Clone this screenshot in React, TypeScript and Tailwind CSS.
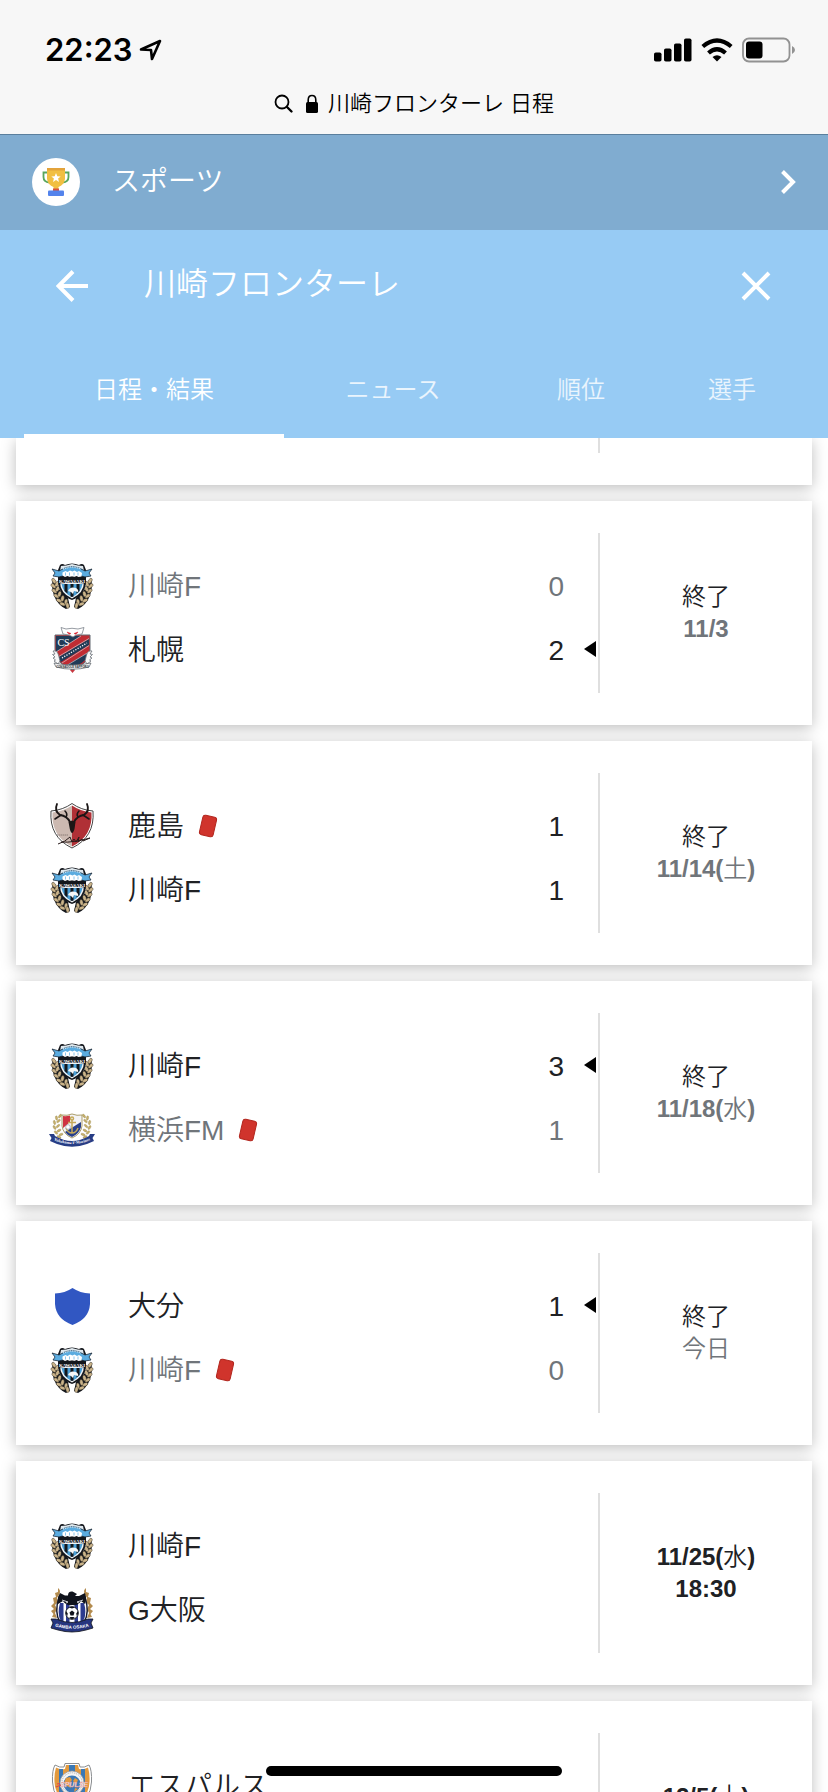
import React from 'react';

type TeamId = 'kawasaki' | 'sapporo' | 'kashima' | 'yokohama' | 'oita' | 'gamba' | 'spulse';

interface Side {
  team: TeamId;
  name: string;
  score?: number;
  redCard?: boolean;
  winner?: boolean;
  dim?: boolean;
}

interface Match {
  id: number;
  home: Side;
  away: Side;
  status?: string;
  date: string;
  weekday?: string;
  time?: string;
}

const MATCHES: Match[] = [
  {
    id: 1,
    home: { team: 'kawasaki', name: '川崎F', score: 0, dim: true },
    away: { team: 'sapporo', name: '札幌', score: 2, winner: true },
    status: '終了',
    date: '11/3',
  },
  {
    id: 2,
    home: { team: 'kashima', name: '鹿島', score: 1, redCard: true },
    away: { team: 'kawasaki', name: '川崎F', score: 1 },
    status: '終了',
    date: '11/14',
    weekday: '土',
  },
  {
    id: 3,
    home: { team: 'kawasaki', name: '川崎F', score: 3, winner: true },
    away: { team: 'yokohama', name: '横浜FM', score: 1, redCard: true, dim: true },
    status: '終了',
    date: '11/18',
    weekday: '水',
  },
  {
    id: 4,
    home: { team: 'oita', name: '大分', score: 1, winner: true },
    away: { team: 'kawasaki', name: '川崎F', score: 0, redCard: true, dim: true },
    status: '終了',
    date: '今日',
  },
  {
    id: 5,
    home: { team: 'kawasaki', name: '川崎F' },
    away: { team: 'gamba', name: 'G大阪' },
    date: '11/25',
    weekday: '水',
    time: '18:30',
  },
  {
    id: 6,
    home: { team: 'spulse', name: 'エスパルス' },
    away: { team: 'kawasaki', name: '川崎F' },
    date: '12/5',
    weekday: '土',
    time: '14:00',
  },
];

const TABS = ['日程・結果', 'ニュース', '順位', '選手'];

// x, y, rotation of the leaves on the left half of a wreath
const LEAVES = [
  [6, 19, -35],
  [5.5, 24, -50],
  [9, 22, 30],
  [6.5, 29, -55],
  [9.5, 27, 25],
  [8.5, 34, -60],
  [11.5, 32, 15],
  [11, 38.5, -65],
  [14.5, 36.5, 10],
  [14.5, 42, -70],
  [18, 40, 5],
  [19.5, 43.5, -10],
];

const KawasakiCrest = () => (
  <svg viewBox="0 0 48 48" className="w-12 h-12 shrink-0" aria-hidden="true">
    {[false, true].map(flip => (
      <g key={String(flip)} transform={flip ? 'translate(48 0) scale(-1 1)' : undefined}>
        <path d="M5 16C2 28 7 42 18 47L22 45 20 36 10 26Z" fill="#14171c" />
        {LEAVES.map(([x, y, r]) => (
          <ellipse key={`${x}-${y}`} cx={x} cy={y} rx="1.7" ry="3" transform={`rotate(${r} ${x} ${y})`} fill="#cbb48a" stroke="#2a261f" strokeWidth="0.4" />
        ))}
      </g>
    ))}
    <path d="M12 3Q14 1 17 3Q24 0 31 3Q34 1 36 3L38 8V20Q37 33 24 38Q11 33 10 20V8Z" fill="#14171c" />
    <path d="M13 4Q18 4 24 2Q30 4 35 4L36 9H12Z" fill="#dfe8ee" />
    <path d="M12 20H36Q36 31 24 36.500Q12 31 12 20Z" fill="#f2f5f7" />
    <path d="M13.500 22H34.500Q33 31 24 35Q15 31 13.500 22Z" fill="#4b9fd5" />
    <path d="M16.500 22h3v9.500l-3-2.500zM22.500 22h3v12.500l-1.500.500-1.500-.500zM28.500 22h3v7l-3 2.500z" fill="#14171c" />
    <path d="M20 29Q22 24 28 26Q31 28 30 30L26 29 25 32 23 30Z" fill="#f5f7f8" />
    <path d="M4 7L11 9Q24 0 37 9L44 7 41 11 43 14 37 15Q24 10 11 15L5 14 7 11Z" fill="#5bace0" stroke="#1c2a38" strokeWidth="0.800" />
    <path d="M15 7Q24 3 33 7" fill="none" stroke="#bfe0f4" strokeWidth="1.500" strokeDasharray="1.200 .600" />
    <path d="M14.500 10.500l3-1.500 2 1 2.500-1.500 2.500 1 2-1 2.500 1.500 2-1 3 2-.500 3.500-3 .500-2-1-2 1-2.500-.500-2.500.500-2-1-2.500 1-2.500-1.500z" fill="#fff" />
    <path d="M17.500 10.500v3M21.500 10.500v3M26 10.500v3M30 10.500v3" stroke="#5bace0" strokeWidth=".700" />
    <path d="M11 15.500Q24 14 37 15.500V21.500Q24 20 11 21.500Z" fill="#14171c" />
    <text x="24" y="20.500" textAnchor="middle" fontSize="4.800" fontWeight="700" fontFamily="'Liberation Serif', serif" fill="#fff">KAWASAKI</text>
  </svg>
);

const SapporoCrest = () => (
  <svg viewBox="0 0 48 48" className="w-12 h-12 shrink-0" aria-hidden="true">
    <path d="M7 9H42V24Q42 37 24.500 44Q7 37 7 24Z" fill="#c02c33" stroke="#646b73" strokeWidth="1" />
    <path d="M8 10H33L8 26Z" fill="#203a56" />
    <path d="M9 32L41 13V19L13 36Z" fill="#203a56" />
    <path d="M17 40L41 26Q40 35 28 40L24 42Z" fill="#203a56" />
    <path d="M8 26L33 10M9 31.500L41 12.500M14 37L41 19.500M17 40.500L41 26" stroke="#e7e3e4" strokeWidth=".600" fill="none" />
    <path d="M14 32L39 17" stroke="#fff" strokeWidth="1.300" strokeDasharray="1.200 1.400" />
    <text x="15.500" y="20" textAnchor="middle" fontSize="10" fontFamily="'Liberation Serif', serif" fill="#fff">CS</text>
    <path d="M13 1.500L18 3Q24 1.500 30 3L36 1.500 34 8 28 9 25 11 21 9 15 8Z" fill="#fff" stroke="#7b828a" strokeWidth=".800" />
    <path d="M19 6l4 1.500-2 .800zM30 6l-4 1.500 2 .800z" fill="#d8232f" stroke="#d8232f" strokeWidth=".500" />
    {[false, true].map(flip => (
      <path key={String(flip)} transform={flip ? 'translate(49 0) scale(-1 1)' : undefined} d="M5 25Q9 24 10.500 29L12 35 10 38 6 35 7.500 34 5 32 7 31 4.500 28.500 7 28Z" fill="#f7f7f7" stroke="#6b7178" strokeWidth=".800" />
    ))}
    <path d="M6 37Q24.500 41 43 37L41 41Q24.500 45.500 8 41Z" fill="#f1f1f1" stroke="#555b62" strokeWidth=".700" />
    <text x="24.500" y="42" textAnchor="middle" fontSize="2.800" fontWeight="700" fontFamily="'Liberation Sans', sans-serif" fill="#30353b">CONSADOLE SAPPORO</text>
    <path d="M22 44h5l-2.500 3z" fill="#c63840" />
  </svg>
);

const KashimaCrest = () => (
  <svg viewBox="0 0 48 48" className="w-12 h-12 shrink-0" aria-hidden="true">
    <path d="M3 9Q15 8 24 1.500Q33 8 45 9Q47 35 24 46Q1 35 3 9Z" fill="#fff" stroke="#474747" strokeWidth="1" />
    <path d="M4.500 10.500Q16 9 24 3.500V44.500Q3 34 4.500 10.500Z" fill="#ccb9b1" />
    <path d="M43.500 10.500Q32 9 24 3.500V44.500Q45 34 43.500 10.500Z" fill="#b03036" />
    <g fill="none" stroke="#1b1616" strokeWidth="1.900" strokeLinecap="round">
      <path d="M22 20Q19 14 12 13Q6 9 9 2" />
      <path d="M26 20Q29 14 36 13Q42 9 39 2" />
      <path d="M13 13L7 17M18 15Q20 12 17 9M35 13L41 17M30 15Q28 12 31 9" strokeWidth="1.600" />
    </g>
    <path d="M20.500 20L24 18.500 27.500 20 26.500 27Q24 35 21.800 27Z" fill="#1b1616" />
    <path d="M9 33H20" stroke="#7b6c67" strokeWidth=".800" strokeDasharray="1.500 .500" />
    <path d="M10 42Q17 40 22 35L24 40 26 37 28 40 31 35 30 40 34 37 35 39 42 36M13 40Q25 41 42 36" fill="none" stroke="#2a1c1c" strokeWidth="1" />
  </svg>
);

const YokohamaCrest = () => (
  <svg viewBox="0 0 48 48" className="w-12 h-12 shrink-0" aria-hidden="true">
    {[false, true].map(flip => (
      <g key={String(flip)} transform={flip ? 'translate(48 0) scale(-1 1)' : undefined}>
        {[[12, 10, 40], [8.5, 12, -10], [10.5, 15, 50], [6.5, 16.5, -15], [10, 20, 50], [6.5, 21.5, -30], [11, 24.5, 60], [8, 26.5, -45], [13, 28.5, 70], [11, 31, -60]].map(([x, y, r]) => (
          <ellipse key={`${x}-${y}`} cx={x} cy={y} rx="1.100" ry="2.200" transform={`rotate(${r} ${x} ${y})`} fill="#c6b06a" stroke="#8e7c42" strokeWidth=".300" />
        ))}
      </g>
    ))}
    <path d="M14 9Q19 10 24 8Q29 10 34 9V20Q33 28 24 32Q15 28 14 20Z" fill="#f4f4f6" stroke="#a2935c" strokeWidth=".900" />
    <path d="M15 10Q18.500 10.500 22 9.500V16L15 22Z" fill="#cf3342" />
    <path d="M33 16V21Q31 28 24 31Q19 29 17 26Z" fill="#294089" />
    <g fill="none" stroke="#c5a95a" strokeWidth="1.500">
      <circle cx="24" cy="12.500" r="1.500" />
      <path d="M24 14V27M20 16.500H28M18 22Q20 27 24 27Q28 27 30 22" />
    </g>
    <circle cx="20" cy="21" r="2.300" fill="#fff" stroke="#737890" strokeWidth=".500" />
    <path d="M1 28L6 28 7 30Q24 40 41 30L42 28 47 28 44.500 32 46 35 39 38Q24 43.500 9 38L2 35 3.500 32Z" fill="#273d85" />
    <path id="ym-ribbon" d="M4 33.500Q24 42.500 44 33.500" fill="none" />
    <text fontSize="4" fontWeight="700" fontFamily="'Liberation Serif', serif" fill="#fff" textAnchor="middle">
      <textPath href="#ym-ribbon" startOffset="50%">Yokohama F·Marinos</textPath>
    </text>
  </svg>
);

const OitaCrest = () => (
  <svg viewBox="0 0 48 48" className="w-12 h-12 shrink-0" aria-hidden="true">
    <path d="M24.500 6Q32 11 42 11.500V22Q41 37 24.500 43Q8 37 7 22V11.500Q17 11 24.500 6Z" fill="#3157c2" />
  </svg>
);

const GambaCrest = () => (
  <svg viewBox="0 0 48 48" className="w-12 h-12 shrink-0" aria-hidden="true">
    {[false, true].map(flip => (
      <path key={String(flip)} transform={flip ? 'translate(48 0) scale(-1 1)' : undefined} d="M10 2Q13 4 11.500 8L9 12 10 16 7 19 9 23 7 27 9 32 4 31 5.500 28 3 25 6 23 3 20 6 17 5 12 8 11 7 7 10 6Z" fill="#b38b4e" />
    ))}
    <path d="M11 11H37Q42 27 36 36L24 41 12 36Q6 27 11 11Z" fill="#fff" stroke="#171a2c" strokeWidth="1.500" />
    <path d="M12 17h3.500v19l-3-1.500Q9 27 12 17zM18 17h3.500v21L18 36.500zM26.500 17H30v19.500L26.500 38zM32.500 17H36q3 10-.500 17.500l-3 1.500z" fill="#2c3b8f" />
    <path d="M12 7L17 9.500H20Q20 5 24.500 5.500L29 8 27 10H31L37 7Q39 13 37 18L33 15Q30 20 24.500 19Q18 20 15 15L10 18Q9 12 12 7Z" fill="#10131c" />
    <path d="M14 14l6 2-2 1M35 14l-6 2 2 1" fill="none" stroke="#e2e2e6" strokeWidth=".900" />
    <circle cx="24" cy="27" r="6.300" fill="#fff" stroke="#10131c" strokeWidth="1" />
    <path d="M24 24.500l2.500 2-1 3h-3l-1-3zM21 21.500l3 1 3-1-1.500-.800h-3zM18 25l1.800 2.500-.500 2.500-1.400-2zM30 25l-1.800 2.500.500 2.500 1.400-2zM21 32l1.500-1h3l1.500 1-3 1.200z" fill="#10131c" />
    <path d="M3 33L8 33Q24 40 40 33L45 33 43 37 45 42 38 44Q24 48 10 44L3 42 5 37Z" fill="#26357f" stroke="#10131c" strokeWidth=".800" />
    <path id="gb-ribbon" d="M5 40Q24 45.500 43 40" fill="none" />
    <text fontSize="4.500" fontWeight="700" fontFamily="'Liberation Sans', sans-serif" fill="#fff" textAnchor="middle">
      <textPath href="#gb-ribbon" startOffset="50%">GAMBA OSAKA</textPath>
    </text>
  </svg>
);

const SpulseCrest = () => (
  <svg viewBox="0 0 48 48" className="w-12 h-12 shrink-0" aria-hidden="true">
    <path d="M17 1.500H31L32 5Q36 6 41 3Q44 8 43.500 20Q43 38 24 46.500Q5 38 4.500 20Q4 8 7 3Q12 6 16 5Z" fill="#fff" stroke="#8b8e91" strokeWidth="1" />
    <path d="M18 3H30L31 7Q36 8 40 5.500Q42 12 41.500 20Q41 36 24 44Q7 36 6.500 20Q6 12 8 5.500Q12 8 17 7Z" fill="#e39a3e" />
    <path d="M11 7h4v31l-4-5zM21 3h6v40h-6zM33 7h4v27l-4 4z" fill="#3a78b5" />
    <circle cx="24" cy="21" r="12" fill="#f6f6f6" stroke="#9b9b9b" strokeWidth=".800" />
    <circle cx="24" cy="21" r="10.200" fill="none" stroke="#aaa" strokeWidth="1" strokeDasharray="1 1" />
    <circle cx="24" cy="22" r="8.500" fill="#3a78b5" />
    <path d="M18 16l4-1 2 3-3 4 2 4-4-2-3-3zM27 16l3 2-2 4-3-3zM27 26l3 1-4 3z" fill="#e39a3e" />
    <text x="26" y="24.500" textAnchor="middle" fontSize="7" fontWeight="700" fontStyle="italic" fontFamily="'Liberation Sans', sans-serif" fill="#fff" stroke="#e58077" strokeWidth=".300">SPULSE</text>
    <path d="M8 25l5-2M9 22l3-.500" stroke="#e0454b" strokeWidth="1.200" />
  </svg>
);

const CRESTS: Record<TeamId, React.FC> = {
  kawasaki: KawasakiCrest,
  sapporo: SapporoCrest,
  kashima: KashimaCrest,
  yokohama: YokohamaCrest,
  oita: OitaCrest,
  gamba: GambaCrest,
  spulse: SpulseCrest,
};

const RedCard = () => (
  <svg viewBox="0 0 20 24" className="w-5 h-6 shrink-0" role="img" aria-label="レッドカード">
    <rect x="3" y="2" width="14" height="20" rx="2.5" transform="rotate(13 10 12)" fill="#d0342c" stroke="#b3271f" strokeWidth="1" />
  </svg>
);

const TeamRow: React.FC<{ side: Side }> = ({ side }) => {
  const Crest = CRESTS[side.team];
  return (
    <div className={`flex items-center h-16 pl-8 ${side.dim ? 'text-[#70757a]' : 'text-[#202124]'}`}>
      <Crest />
      <span className="ml-8 pt-[2px] text-[28px] leading-8 whitespace-nowrap">{side.name}</span>
      {side.redCard && <span className="ml-[14px]"><RedCard /></span>}
      <span className="ml-auto pt-px text-[28px] leading-8">{side.score}</span>
      <span className="w-[34px] flex justify-end pr-[2px] pb-[2px]">
        {side.winner && (
          <svg viewBox="0 0 12 16" className="w-3 h-4" role="img" aria-label="勝利">
            <path d="M12 0V16L0 8Z" fill="#000" />
          </svg>
        )}
      </span>
    </div>
  );
};

const MatchCard: React.FC<{ match: Match }> = ({ match }) => (
  <article className="flex h-[224px] shrink-0 py-8 bg-white shadow-[0_3px_14px_rgba(0,0,0,0.26)]">
    <div className="flex-1 pt-[21px] border-r-2 border-[#dfdfdf]">
      <TeamRow side={match.home} />
      <TeamRow side={match.away} />
    </div>
    <div className={`w-[212px] flex flex-col items-center justify-center text-2xl leading-8 ${match.status ? 'text-[#70757a]' : 'text-[#202124]'}`}>
      {match.status && <span className="text-[#202124]">{match.status}</span>}
      <span className="font-bold">
        {/\d/.test(match.date) ? match.date : <span className="font-[350]">{match.date}</span>}
        {match.weekday && <>(<span className="font-[350]">{match.weekday}</span>)</>}
      </span>
      {match.time && <span className="font-bold">{match.time}</span>}
    </div>
  </article>
);

const StatusBar = () => (
  <div className="flex items-center justify-between h-[100px] pl-[45px] pr-8 text-black">
    <div className="flex items-center gap-[6px]">
      <span className="text-[31px] leading-9 font-semibold font-['Inter',sans-serif]">22:23</span>
      <svg viewBox="0 0 24 24" className="w-6 h-6" aria-hidden="true">
        <path d="M2 11.500L21 3L13 21L12 12Z" fill="none" stroke="#000" strokeWidth="2.600" strokeLinejoin="round" />
      </svg>
    </div>
    <div className="flex items-center gap-[9px]">
      <svg viewBox="0 0 38 24" className="w-[38px] h-6" aria-hidden="true">
        <rect x="0" y="14.500" width="7.500" height="9" rx="1.800" />
        <rect x="10" y="10.500" width="7.500" height="13" rx="1.800" />
        <rect x="20" y="5.500" width="7.500" height="18" rx="1.800" />
        <rect x="30" y="0.500" width="7.500" height="23" rx="1.800" />
      </svg>
      <svg viewBox="0 0 32 24" className="w-8 h-6" aria-hidden="true">
        <g fill="none" stroke="#000" strokeWidth="4.200">
          <path d="M1.800 8.500Q16 -3.500 30.200 8.500" />
          <path d="M7.500 15Q16 7.500 24.500 15" />
        </g>
        <path d="M11.500 19Q16 15.500 20.500 19L16 23.500Z" />
      </svg>
      <svg viewBox="0 0 54 26" className="w-[54px] h-[26px]" aria-hidden="true">
        <rect x="1" y="1.500" width="46.500" height="23" rx="6" fill="none" stroke="#929292" strokeWidth="1.800" />
        <rect x="4" y="4.500" width="16.500" height="17" rx="3" />
        <path d="M50 9Q53 10.500 53 13Q53 15.500 50 17Z" fill="#929292" />
      </svg>
    </div>
  </div>
);

export default function App() {
  return (
    <div className="relative h-screen flex flex-col overflow-hidden bg-white font-[350] font-['Liberation_Sans','Noto_Sans_CJK_JP',sans-serif]">
      <header className="h-[135px] shrink-0 bg-[#f7f7f7] border-b border-[#5a7f9d]">
        <StatusBar />
        <div className="flex items-center justify-center h-2 pb-px text-[22px] leading-6 text-black">
          <svg viewBox="0 0 20 20" className="w-5 h-5 mr-3" fill="none" stroke="#000" strokeWidth="1.800" strokeLinecap="round" aria-hidden="true">
            <circle cx="8" cy="8" r="6.500" />
            <path d="M13 13L17.500 17.500" strokeWidth="2.400" />
          </svg>
          <svg viewBox="0 0 12 20" className="w-3 h-5 mr-[10px]" aria-hidden="true">
            <path d="M2.200 9V6Q2.200 1.500 6 1.500Q9.800 1.500 9.800 6V9" fill="none" stroke="#000" strokeWidth="1.600" />
            <rect x="0" y="8" width="12" height="11" rx="1.600" />
          </svg>
          <span>川崎フロンターレ 日程</span>
        </div>
      </header>

      <a href="#sports" className="flex items-center h-[95px] shrink-0 px-8 pb-[2px] bg-[#80acd0] text-white">
        <span className="w-12 h-12 rounded-full bg-white flex items-center justify-center">
          <svg viewBox="0 0 28 28" className="w-7 h-7" aria-hidden="true">
            <path d="M6 4.500H1.500V9Q1.500 14 7.500 14.500M22 4.500H26.500V9Q26.500 14 20.500 14.500" fill="none" stroke="#58a65c" strokeWidth="1.800" />
            <path d="M5 0H23V11Q22 17 16.500 19V22H11.500V19Q6 17 5 11Z" fill="#f1bf42" />
            <path d="M5 0H23V2.500H5Z" fill="#e3a33b" />
            <path d="M11 20.500H17V23H11Z" fill="#d9503f" />
            <path d="M14 5l1.300 3.200 3.400.200-2.600 2.200.900 3.300-3-1.800-3 1.800.900-3.300-2.600-2.200 3.400-.200z" fill="#fff" />
            <rect x="6" y="22.500" width="16" height="5.500" rx="1" fill="#5383ec" />
          </svg>
        </span>
        <span className="ml-8 text-[28px] leading-8">スポーツ</span>
        <svg viewBox="0 0 16 24" className="w-4 h-6 ml-auto" fill="none" stroke="#fff" strokeWidth="4" aria-hidden="true">
          <path d="M2.500 1.500L13 12L2.500 22.500" />
        </svg>
      </a>

      <div className="shrink-0 h-[208px] flex flex-col bg-[#97cbf4] text-white">
        <div className="flex items-center h-[112px] px-14">
          <button type="button" aria-label="戻る">
            <svg viewBox="0 0 32 32" className="w-8 h-8" fill="none" stroke="#fff" strokeWidth="4" aria-hidden="true">
              <path d="M17 1.500L2.500 16L17 30.500M3 16H32" />
            </svg>
          </button>
          <h1 className="ml-14 pb-1 text-[32px] leading-10 font-[350]">川崎フロンターレ</h1>
          <button type="button" aria-label="閉じる" className="ml-auto">
            <svg viewBox="0 0 32 32" className="w-8 h-8" fill="none" stroke="#fff" strokeWidth="4" aria-hidden="true">
              <path d="M3 3L29 29M29 3L3 29" />
            </svg>
          </button>
        </div>
        <nav role="tablist" className="flex-1 mx-6 grid grid-cols-[260fr_218fr_158fr_144fr]">
          {TABS.map((tab, i) => (
            <button
              key={tab}
              type="button"
              role="tab"
              aria-selected={i === 0}
              className={`pt-1 border-b-4 text-2xl ${i === 0 ? 'border-white' : 'border-transparent text-white/80'}`}
            >
              {tab}
            </button>
          ))}
        </nav>
      </div>

      <main className="flex-1 min-h-0 overflow-hidden px-4 flex flex-col gap-4">
        {/* tail of the card scrolled under the header */}
        <div className="flex h-[47px] shrink-0 pb-8 bg-white shadow-[0_3px_14px_rgba(0,0,0,0.26)]">
          <div className="flex-1 border-r-2 border-[#dfdfdf]" />
          <div className="w-[212px]" />
        </div>
        {MATCHES.map(match => (
          <MatchCard key={match.id} match={match} />
        ))}
      </main>

      <div className="absolute bottom-4 left-1/2 -translate-x-1/2 w-[296px] h-[10px] rounded-full bg-black" />
    </div>
  );
}
